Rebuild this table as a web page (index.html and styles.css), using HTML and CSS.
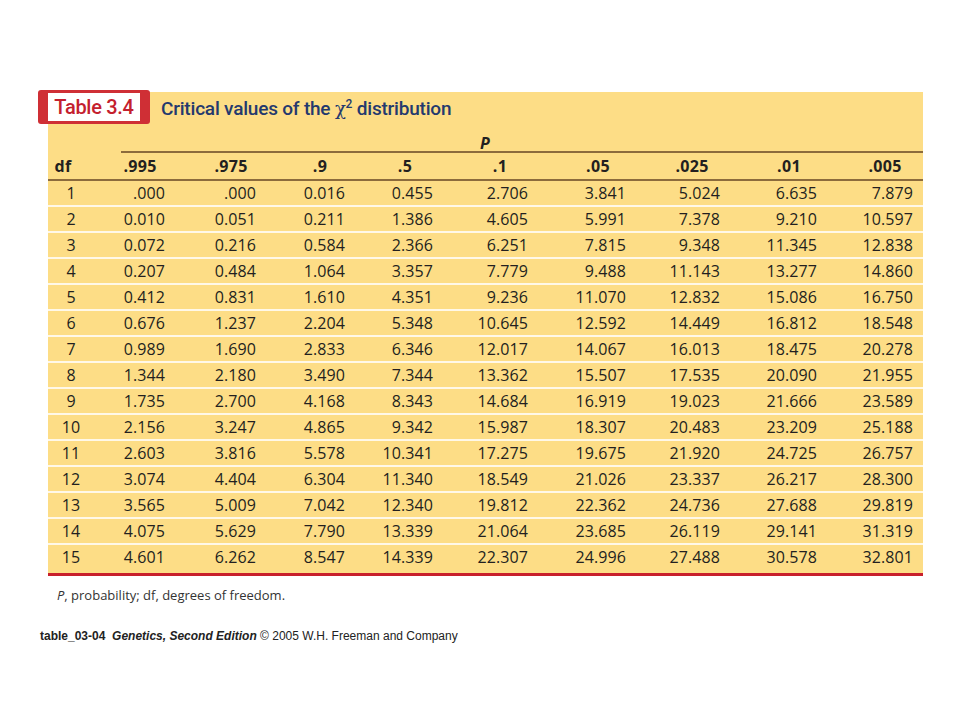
FILE: index.html
```html
<!DOCTYPE html>
<html>
<head>
<meta charset="utf-8">
<link rel="stylesheet" href="styles.css">
</head>
<body>
<div class="page">
  <div class="panel">
    <div class="caption-bar">
      <div class="tab"><span class="tab-label">Table 3.4</span></div>
      <div class="title">Critical values of the <span class="chi">χ</span><sup>2</sup> distribution</div>
    </div>
    <div class="p-row"><span class="p-label">P</span></div>
    <div class="row head">
      <div>df</div><div>.995</div><div>.975</div><div>.9</div><div>.5</div><div>.1</div><div>.05</div><div>.025</div><div>.01</div><div>.005</div>
    </div>
    <div class="row"><div>1</div><div>.000</div><div>.000</div><div>0.016</div><div>0.455</div><div>2.706</div><div>3.841</div><div>5.024</div><div>6.635</div><div>7.879</div></div>
    <div class="row"><div>2</div><div>0.010</div><div>0.051</div><div>0.211</div><div>1.386</div><div>4.605</div><div>5.991</div><div>7.378</div><div>9.210</div><div>10.597</div></div>
    <div class="row"><div>3</div><div>0.072</div><div>0.216</div><div>0.584</div><div>2.366</div><div>6.251</div><div>7.815</div><div>9.348</div><div>11.345</div><div>12.838</div></div>
    <div class="row"><div>4</div><div>0.207</div><div>0.484</div><div>1.064</div><div>3.357</div><div>7.779</div><div>9.488</div><div>11.143</div><div>13.277</div><div>14.860</div></div>
    <div class="row"><div>5</div><div>0.412</div><div>0.831</div><div>1.610</div><div>4.351</div><div>9.236</div><div>11.070</div><div>12.832</div><div>15.086</div><div>16.750</div></div>
    <div class="row"><div>6</div><div>0.676</div><div>1.237</div><div>2.204</div><div>5.348</div><div>10.645</div><div>12.592</div><div>14.449</div><div>16.812</div><div>18.548</div></div>
    <div class="row"><div>7</div><div>0.989</div><div>1.690</div><div>2.833</div><div>6.346</div><div>12.017</div><div>14.067</div><div>16.013</div><div>18.475</div><div>20.278</div></div>
    <div class="row"><div>8</div><div>1.344</div><div>2.180</div><div>3.490</div><div>7.344</div><div>13.362</div><div>15.507</div><div>17.535</div><div>20.090</div><div>21.955</div></div>
    <div class="row"><div>9</div><div>1.735</div><div>2.700</div><div>4.168</div><div>8.343</div><div>14.684</div><div>16.919</div><div>19.023</div><div>21.666</div><div>23.589</div></div>
    <div class="row"><div>10</div><div>2.156</div><div>3.247</div><div>4.865</div><div>9.342</div><div>15.987</div><div>18.307</div><div>20.483</div><div>23.209</div><div>25.188</div></div>
    <div class="row"><div>11</div><div>2.603</div><div>3.816</div><div>5.578</div><div>10.341</div><div>17.275</div><div>19.675</div><div>21.920</div><div>24.725</div><div>26.757</div></div>
    <div class="row"><div>12</div><div>3.074</div><div>4.404</div><div>6.304</div><div>11.340</div><div>18.549</div><div>21.026</div><div>23.337</div><div>26.217</div><div>28.300</div></div>
    <div class="row"><div>13</div><div>3.565</div><div>5.009</div><div>7.042</div><div>12.340</div><div>19.812</div><div>22.362</div><div>24.736</div><div>27.688</div><div>29.819</div></div>
    <div class="row"><div>14</div><div>4.075</div><div>5.629</div><div>7.790</div><div>13.339</div><div>21.064</div><div>23.685</div><div>26.119</div><div>29.141</div><div>31.319</div></div>
    <div class="row last"><div>15</div><div>4.601</div><div>6.262</div><div>8.547</div><div>14.339</div><div>22.307</div><div>24.996</div><div>27.488</div><div>30.578</div><div>32.801</div></div>
  </div>
  <p class="footnote"><i>P</i>, probability; df, degrees of freedom.</p>
  <p class="credit"><b>table_03-04</b>&nbsp;&nbsp;<b><i>Genetics, Second Edition</i></b> © 2005 W.H. Freeman and Company</p>
</div>
</body>
</html>
```
FILE: styles.css
```css
html, body {
  margin: 0;
  padding: 0;
  background: #ffffff;
}

.page {
  width: 960px;
  height: 720px;
  padding-top: 92px;
  box-sizing: border-box;
}

.panel {
  margin-left: 48px;
  width: 875px;
  background: #fddd86;
  padding-bottom: 4px;
  border-bottom: 3px solid #c8202c;
  font-family: "Open Sans", "DejaVu Sans", sans-serif;
  color: #231f20;
}

.caption-bar {
  display: flex;
  align-items: center;
  height: 34px;
}

.tab {
  margin-left: -10px;
  margin-top: -4px;
  height: 34px;
  box-sizing: border-box;
  width: 112px;
  background: #cf2f35;
  border-radius: 3px;
  padding: 3px 10px;
  display: flex;
}

.tab-label {
  flex: 1;
  background: #ffffff;
  color: #c4202e;
  font-family: "Roboto", "DejaVu Sans", sans-serif;
  font-size: 20px;
  font-weight: 500;
  line-height: 28px;
  text-align: center;
  letter-spacing: -0.3px;
}

.title {
  margin-left: 11px;
  margin-top: -2px;
  color: #24396e;
  font-family: "Roboto", "DejaVu Sans", sans-serif;
  font-size: 19px;
  font-weight: 500;
  letter-spacing: -0.2px;
}

.title .chi {
  font-family: "DejaVu Serif", serif;
  font-weight: 400;
  font-size: 18px;
}

.title sup {
  font-size: 12px;
  vertical-align: 7px;
  line-height: 0;
}

.p-row {
  height: 25px;
  margin-left: 73px;
  border-bottom: 2px solid #8c6b3c;
  display: flex;
  justify-content: center;
  align-items: flex-end;
}

.p-label {
  font-weight: 700;
  font-style: italic;
  font-size: 16px;
  line-height: 20px;
  margin-left: -74px;
  margin-bottom: -2px;
}

.row {
  display: grid;
  grid-template-columns: 52px 65px 91px 89px 88px 95px 98px 94px 97px 96px;
  height: 24px;
  align-items: center;
  border-bottom: 2px solid #fff8e8;
  font-size: 16px;
  letter-spacing: 0.1px;
  line-height: 24px;
}

.row > div {
  justify-self: end;
  width: 50px;
  text-align: right;
}

.row > div:nth-child(n+5) {
  width: 56px;
}

.row > div:first-child {
  justify-self: start;
  width: 46px;
  text-align: center;
}

.row.head {
  height: 26px;
  border-bottom: 2px solid #8c6b3c;
  font-weight: 700;
  letter-spacing: 0.3px;
}

.row.head > div {
  text-align: center;
}

.row.head > div:first-child {
  width: 30px;
  text-align: center;
}

.row.last {
  border-bottom: none;
}

.footnote {
  margin: 10px 0 0 57px;
  font-family: "Open Sans", "DejaVu Sans", sans-serif;
  font-size: 13px;
  color: #333333;
  line-height: 18px;
}

.credit {
  margin: 25px 0 0 40px;
  font-family: "Liberation Sans", Arial, sans-serif;
  font-size: 12px;
  color: #222222;
}
```
